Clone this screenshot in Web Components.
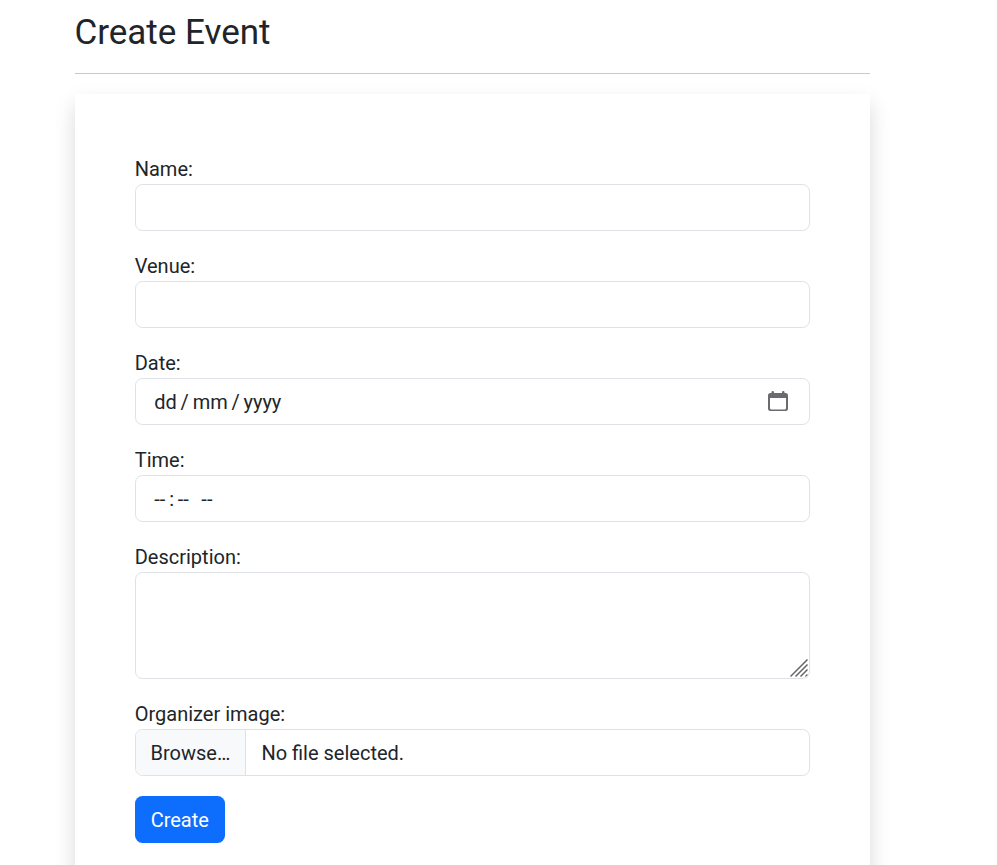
<!DOCTYPE html>
<html lang="en">
<head>
<meta charset="utf-8">
<title>Create Event</title>
<style>
html{height:100%;overflow:hidden;background:#fff}
body{margin:0;height:100%;overflow:hidden;font:20px/30px Roboto,sans-serif;color:#212529}
</style>
</head>
<body>
<event-page>
  <span slot="title">Create Event</span>
  <form-card>
    <form-field label="Name:"><text-box></text-box></form-field>
    <form-field label="Venue:"><text-box></text-box></form-field>
    <form-field label="Date:"><date-box></date-box></form-field>
    <form-field label="Time:"><time-box></time-box></form-field>
    <form-field label="Description:"><area-box></area-box></form-field>
    <form-field label="Organizer image:"><file-box></file-box></form-field>
    <submit-button>Create</submit-button>
  </form-card>
</event-page>
<script>
const define = (name, html, setup) => customElements.define(name, class extends HTMLElement {
  connectedCallback() {
    if (this.shadowRoot) return;
    const root = this.attachShadow({ mode: 'open' });
    root.innerHTML = html;
    if (setup) setup(this, root);
  }
});

const box = `*{box-sizing:border-box}
:host{display:flex;align-items:center;box-sizing:border-box;height:47px;border:1px solid #dee2e6;border-radius:7.5px;background:#fff;overflow:hidden}`;

define('event-page', `<style>
:host{display:block;width:795px;margin-left:75px;padding-top:11px}
h1{margin:0 0 0 -.6px;font-size:35px;line-height:43px;font-weight:400}
hr{margin:19px 0 20px;border:0;height:1px;background:#c8c9ca}
</style><h1><slot name="title"></slot></h1><hr><slot></slot>`);

define('form-card', `<style>
:host{display:flex;flex-direction:column;align-items:stretch;gap:20px;padding:60px;background:#fff;box-shadow:0 10px 20px rgba(0,0,0,.15)}
</style><slot></slot>`);

define('form-field', `<style>
:host{display:block}
label{display:block;height:30px;margin-left:-.3px}
</style><label></label><slot></slot>`, (el, root) => {
  root.querySelector('label').textContent = el.getAttribute('label');
});

define('text-box', `<style>${box}
input{width:100%;height:100%;border:0;outline:0;padding:0 15px;font:inherit;color:inherit;background:none}
</style><input type="text">`);

define('date-box', `<style>${box}
:host{justify-content:space-between;padding:0 21px 0 18.3px}
.value{display:flex;gap:3.75px}
svg{display:block;margin-bottom:1px}
</style><span class="value"><span>dd</span><span>/</span><span>mm</span><span>/</span><span>yyyy</span></span>
<svg width="20" height="20" viewBox="0 0 20 20"><path d="M3.500 1Q3.500 0 4.750 0T6 1v1h8V1Q14 0 15.250 0T16.500 1v1h1A2.500 2.500 0 0 1 20 4.500v13a2.500 2.500 0 0 1-2.500 2.500h-15A2.500 2.500 0 0 1 0 17.500v-13A2.500 2.500 0 0 1 2.500 2h1zM2 7v10q0 1.500 1.500 1.500h13q1.500 0 1.500-1.500V7z" fill="#6b6a6f" fill-rule="evenodd"/></svg>`);

define('time-box', `<style>${box}
:host{padding:0 18.3px}
.colon{margin:0 3.800px}
.period{margin-left:12.500px}
</style><span>--</span><span class="colon">:</span><span>--</span><span class="period">--</span>`);

define('area-box', `<style>${box}
:host{position:relative;height:107px}
textarea{width:100%;height:100%;border:0;outline:0;resize:none;padding:7px 15px;font:inherit;color:inherit;background:none}
svg{position:absolute;right:0;bottom:0;pointer-events:none}
</style><textarea></textarea>
<svg width="19" height="19" viewBox="0 0 19 19" fill="none" stroke="#66666a" stroke-width="1.500"><path d="M.5 17.500 17.500.5M5.500 17.500l12-12M10.500 17.500l7-7M15.500 17.500l2-2"/></svg>`);

define('file-box', `<style>${box}
.browse{height:100%;width:110px;padding:8px 0 0 14.500px;background:#f8f9fa;border-right:1px solid #dee2e6}
.name{padding-left:15.400px}
</style><span class="browse">Browse…</span><span class="name">No file selected.</span>`);

define('submit-button', `<style>
:host{display:block;align-self:flex-start}
button{display:block;width:90px;height:47px;margin:0;padding:0 .5px 0 0;border:0;border-radius:7.5px;background:#0d6efd;color:#fff;font:inherit}
</style><button type="button"><slot></slot></button>`);
</script>
</body>
</html>
